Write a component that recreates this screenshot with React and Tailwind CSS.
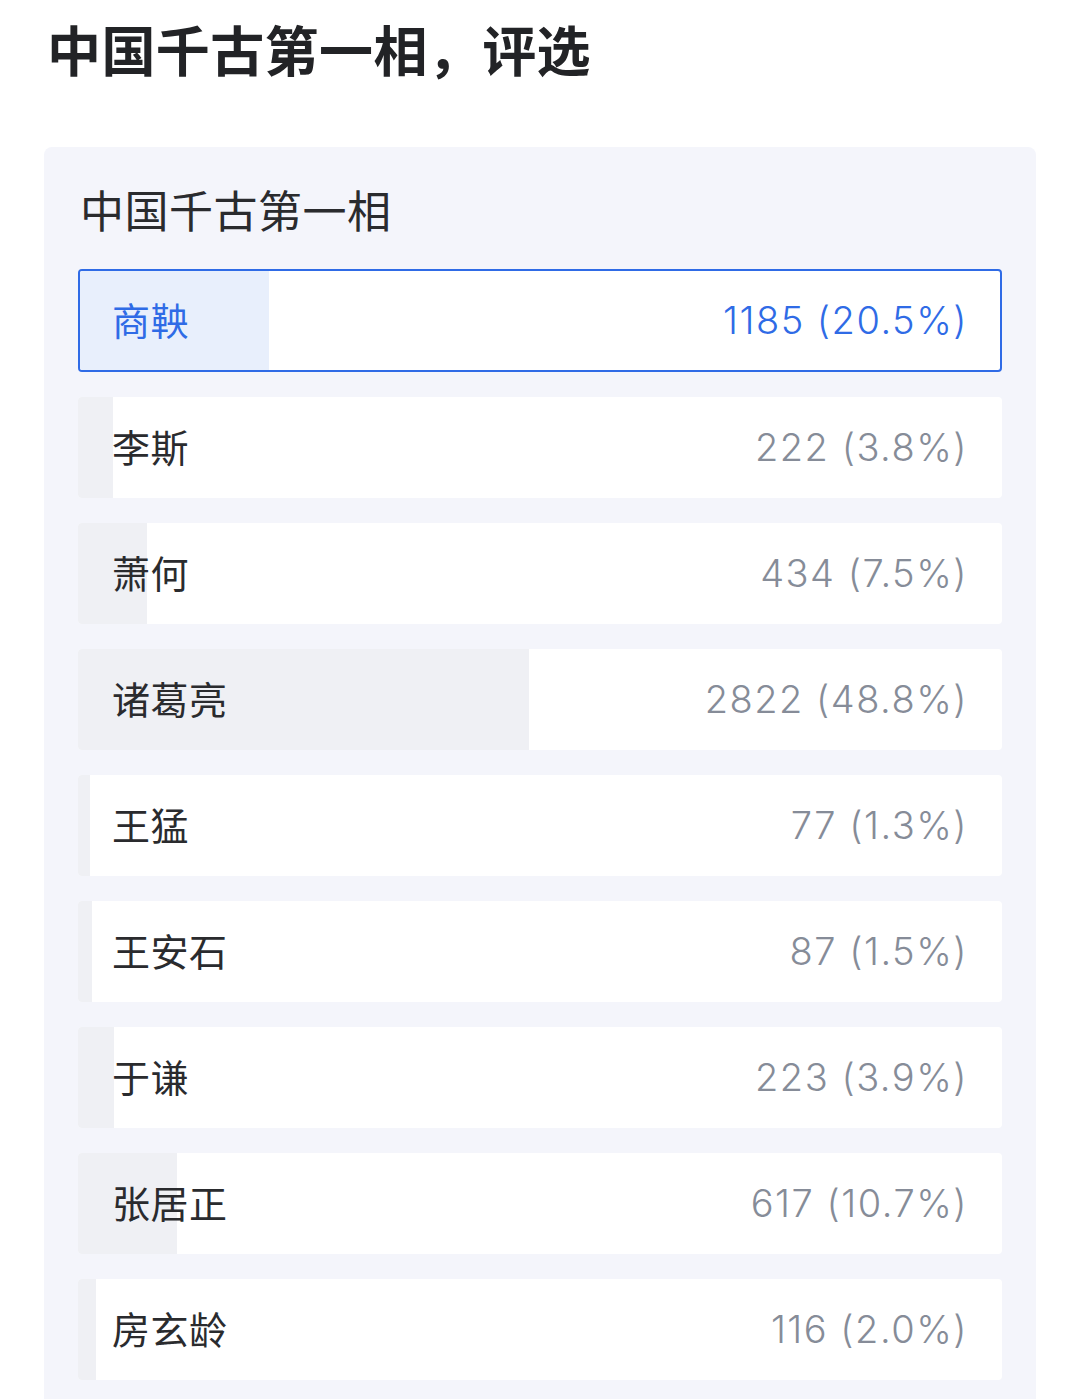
import React from "react";

const rows = [
  { name: "商鞅", count: 1185, pct: 20.5, active: true },
  { name: "李斯", count: 222, pct: 3.8 },
  { name: "萧何", count: 434, pct: 7.5 },
  { name: "诸葛亮", count: 2822, pct: 48.8 },
  { name: "王猛", count: 77, pct: 1.3 },
  { name: "王安石", count: 87, pct: 1.5 },
  { name: "于谦", count: 223, pct: 3.9 },
  { name: "张居正", count: 617, pct: 10.7 },
  { name: "房玄龄", count: 116, pct: 2.0 },
];

const font = { fontFamily: '"Noto Sans", "Noto Sans CJK SC", sans-serif' };
const numFont = { fontFamily: 'Inter, "Noto Sans", sans-serif' };

function Row({ r }) {
  const num = (
    <span className="text-[38px] font-light tracking-[1.5px]" style={numFont}>
      {r.count} ({r.pct.toFixed(1)}%)
    </span>
  );
  if (r.active) {
    return (
      <div className="relative h-[103px] rounded-[4px] border-2 border-[#2f6be6] bg-white overflow-hidden">
        <div className="absolute left-0 top-0 bottom-0 bg-[#e8effc]" style={{ width: `${r.pct}%` }} />
        <div className="relative flex h-full items-center justify-between pl-[32px] pr-[32px] text-[#2f6be6]">
          <span className="text-[38px] tracking-[0.5px]">{r.name}</span>
          {num}
        </div>
      </div>
    );
  }
  return (
    <div className="relative h-[101px] rounded-[4px] bg-white overflow-hidden">
      <div className="absolute left-0 top-0 bottom-0 bg-[#eff0f4]" style={{ width: `${r.pct}%` }} />
      <div className="relative flex h-full items-center justify-between pl-[34px] pr-[34px]">
        <span className="text-[38px] tracking-[0.5px] text-[#2a2b2e]">{r.name}</span>
        <span className="text-[#868c98]">{num}</span>
      </div>
    </div>
  );
}

export default function App() {
  return (
    <div className="w-[1080px] h-[1399px] overflow-hidden bg-white" style={font}>
      <h1 className="pl-[47px] pt-[15px] text-[54px] font-bold leading-[72px] tracking-[0.4px] text-[#222326]">
        中国千古第一相，评选
      </h1>
      <div className="mx-[44px] mt-[60px] rounded-[8px] bg-[#f4f5fb] px-[34px] pt-[35px] pb-[40px]">
        <div className="pl-[2px] text-[44px] leading-[58px] tracking-[0.5px] text-[#2a2b2e]">中国千古第一相</div>
        <div className="mt-[29px] flex flex-col gap-[25px]">
          {rows.map((r) => (
            <Row key={r.name} r={r} />
          ))}
        </div>
      </div>
    </div>
  );
}
